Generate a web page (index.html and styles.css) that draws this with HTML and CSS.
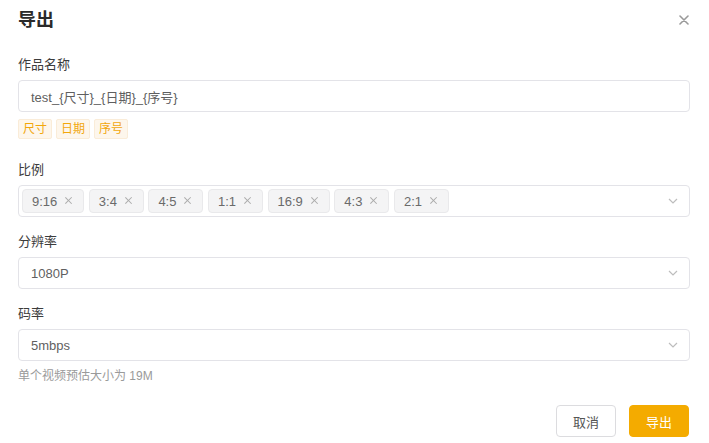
FILE: index.html
```html
<!DOCTYPE html>
<html lang="zh-CN">
<head>
<meta charset="utf-8">
<title>导出</title>
<link rel="stylesheet" href="styles.css">
</head>
<body>
<div class="dialog">
  <div class="header">
    <h1 class="title">导出</h1>
    <button class="close" aria-label="关闭">
      <svg width="10" height="10" viewBox="0 0 10 10"><path d="M1 1L9 9M9 1L1 9" stroke="#9a9a9a" stroke-width="1.6" stroke-linecap="round"/></svg>
    </button>
  </div>

  <div class="item item-name">
    <div class="label">作品名称</div>
    <div class="input">test_{尺寸}_{日期}_{序号}</div>
    <div class="vars">
      <span class="var">尺寸</span>
      <span class="var">日期</span>
      <span class="var">序号</span>
    </div>
  </div>

  <div class="item">
    <div class="label">比例</div>
    <div class="select multi">
      <div class="chips">
        <span class="chip">9:16<i class="x"></i></span>
        <span class="chip">3:4<i class="x"></i></span>
        <span class="chip">4:5<i class="x"></i></span>
        <span class="chip">1:1<i class="x"></i></span>
        <span class="chip">16:9<i class="x"></i></span>
        <span class="chip">4:3<i class="x"></i></span>
        <span class="chip">2:1<i class="x"></i></span>
      </div>
      <svg class="arrow" width="10" height="6" viewBox="0 0 10 6"><path d="M1 1L5 5L9 1" fill="none" stroke="#bdbdbd" stroke-width="1.2"/></svg>
    </div>
  </div>

  <div class="item">
    <div class="label">分辨率</div>
    <div class="select">
      <span class="value">1080P</span>
      <svg class="arrow" width="10" height="6" viewBox="0 0 10 6"><path d="M1 1L5 5L9 1" fill="none" stroke="#bdbdbd" stroke-width="1.2"/></svg>
    </div>
  </div>

  <div class="item">
    <div class="label">码率</div>
    <div class="select">
      <span class="value">5mbps</span>
      <svg class="arrow" width="10" height="6" viewBox="0 0 10 6"><path d="M1 1L5 5L9 1" fill="none" stroke="#bdbdbd" stroke-width="1.2"/></svg>
    </div>
    <div class="hint">单个视频预估大小为 19M</div>
  </div>

  <div class="footer">
    <button class="btn btn-default">取消</button>
    <button class="btn btn-primary">导出</button>
  </div>
</div>
</body>
</html>
```

FILE: styles.css
```css
* { box-sizing: border-box; }
html, body { margin: 0; padding: 0; background: #fff; }
body {
  font-family: "Liberation Sans", "Noto Sans CJK SC", sans-serif;
  color: #333;
  width: 709px;
  height: 443px;
  overflow: hidden;
}
.dialog {
  padding: 0 19px 0 18px;
}
.header {
  height: 38px;
  display: flex;
  align-items: center;
  justify-content: space-between;
}
.title {
  margin: 0;
  font-size: 18px;
  font-weight: bold;
  color: #2a2a2a;
  line-height: 24px;
  padding-top: 1px;
}
.close {
  border: 0;
  background: none;
  padding: 0;
  width: 10px;
  height: 10px;
  margin-right: 1px;
  margin-top: 1px;
  display: flex;
}
.item { margin-top: 15px; }
.item-name { margin-top: 17px; }
.label {
  font-size: 13px;
  line-height: 20px;
  color: #3c3c3c;
  margin-bottom: 5px;
}
.input, .select {
  height: 32px;
  border: 1px solid #e3e3e8;
  border-radius: 4px;
  display: flex;
  align-items: center;
  font-size: 13px;
  color: #5f5f5f;
  padding: 0 12px;
}
.vars {
  display: flex;
  gap: 4px;
  margin-top: 7px;
  margin-bottom: 21px;
}
.var {
  font-size: 12px;
  line-height: 18px;
  padding: 0 4px;
  color: #f2a70c;
  background: #fdf6ec;
  border: 1px solid #faecd8;
  border-radius: 2px;
}
.select { justify-content: space-between; }
.select.multi { padding: 0 12px 0 3px; }
.chips { display: flex; gap: 4.5px; }
.chip {
  display: flex;
  align-items: center;
  height: 24px;
  padding: 0 11px 0 9px;
  background: #f4f4f5;
  border: 1px solid #e9e9eb;
  border-radius: 4px;
  font-size: 13px;
  color: #6a6a6a;
}
.x {
  position: relative;
  width: 7px;
  height: 7px;
  margin-left: 8px;
  margin-top: -2px;
}
.x::before, .x::after {
  content: "";
  position: absolute;
  left: 3px;
  top: -1px;
  width: 1.2px;
  height: 9px;
  background: #ababab;
  transform: rotate(45deg);
}
.x::after { transform: rotate(-45deg); }
.arrow { margin-right: -1px; }
.hint {
  margin-top: 6px;
  font-size: 12px;
  line-height: 18px;
  color: #9a9a9a;
}
.footer {
  display: flex;
  justify-content: flex-end;
  gap: 13px;
  margin-top: 20px;
}
.btn {
  height: 32px;
  width: 60px;
  border-radius: 4px;
  font-size: 13px;
  font-family: "Liberation Sans", "Noto Sans CJK SC", sans-serif;
  padding: 0;
}
.btn-default {
  background: #fff;
  border: 1px solid #dcdcdf;
  color: #555;
}
.btn-primary {
  background: #f4ab00;
  border: 1px solid #f4ab00;
  color: #fff;
  margin-right: 1px;
}
```
